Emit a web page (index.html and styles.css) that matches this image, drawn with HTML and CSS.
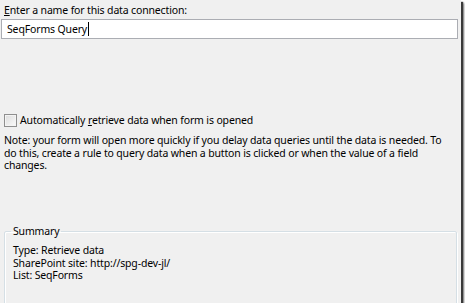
FILE: index.html
```html
<!DOCTYPE html>
<html lang="en">
<head>
    <meta charset="UTF-8">
    <meta name="viewport" content="width=device-width, initial-scale=1.0">
    <title>Data Connection Wizard</title>
    <link rel="stylesheet" href="styles.css">
</head>
<body>
    <div class="panel">
        <!-- Connection name -->
        <div class="label"><u>E</u>nter a name for this data connection:</div>
        <div class="textbox">SeqForms Query<span class="caret"></span></div>

        <!-- Retrieve option -->
        <label class="check-row">
            <span class="checkbox"></span>
            <span>Automatically <u>r</u>etrieve data when form is opened</span>
        </label>
        <p class="note">Note: your form will open more quickly if you delay data queries until the data is needed. To do this, create a rule to query data when a button is clicked or when the value of a field changes.</p>

        <!-- Summary group -->
        <fieldset class="summary">
            <legend>Summary</legend>
            <div class="summary-line">Type: Retrieve data</div>
            <div class="summary-line">SharePoint site: http://spg-dev-jl/</div>
            <div class="summary-line">List: SeqForms</div>
        </fieldset>
    </div>
</body>
</html>
```

FILE: styles.css
```css
body {
    margin: 0;
    padding: 0;
    background-color: #ffffff;
    font-family: "Noto Sans", "DejaVu Sans", sans-serif;
    font-size: 10.5px;
    letter-spacing: -0.15px;
    color: #000000;
}
.panel {
    width: 461px;
    height: 303px;
    box-sizing: border-box;
    padding: 4px 4px 0 4px;
    background-color: #f0f0f0;
    box-shadow: 2px 2px 1px #3a3a3a, 3px 3px 2px rgba(0, 0, 0, 0.5);
    overflow: hidden;
    line-height: 13px;
}
.label {
    height: 15px;
}
.textbox {
    margin-left: -3px;
    width: 457px;
    height: 20px;
    box-sizing: border-box;
    border: 1px solid #abadb3;
    background-color: #ffffff;
    padding: 2px 5px;
    line-height: 15px;
}
.caret {
    display: inline-block;
    width: 1px;
    height: 14px;
    background-color: #000000;
    vertical-align: -3px;
    margin-left: 1px;
}
.check-row {
    display: flex;
    align-items: center;
    gap: 3px;
    height: 13px;
    margin-top: 75px;
}
.checkbox {
    width: 13px;
    height: 13px;
    box-sizing: border-box;
    border: 1px solid #8f8f8f;
    background: linear-gradient(135deg, #dcdcdc, #fbfbfb);
    box-shadow: inset 0 0 0 1px #f4f4f4;
}
.note {
    margin: 7px 0 0 0;
    width: 445px;
    height: 38px;
    line-height: 12.5px;
}
.summary {
    margin: 53px 0 0 0;
    width: 453px;
    height: 90px;
    box-sizing: border-box;
    border: 1px solid #d5dfe5;
    box-shadow: inset 1px 1px 0 #ffffff, 1px 1px 0 #ffffff;
    border-radius: 2px;
    padding: 6px 8px 0 8px;
}
.summary legend {
    padding: 0 2px;
    margin-left: -2px;
    line-height: 13px;
}
.summary-line {
    height: 12.5px;
    line-height: 12.5px;
}
```
